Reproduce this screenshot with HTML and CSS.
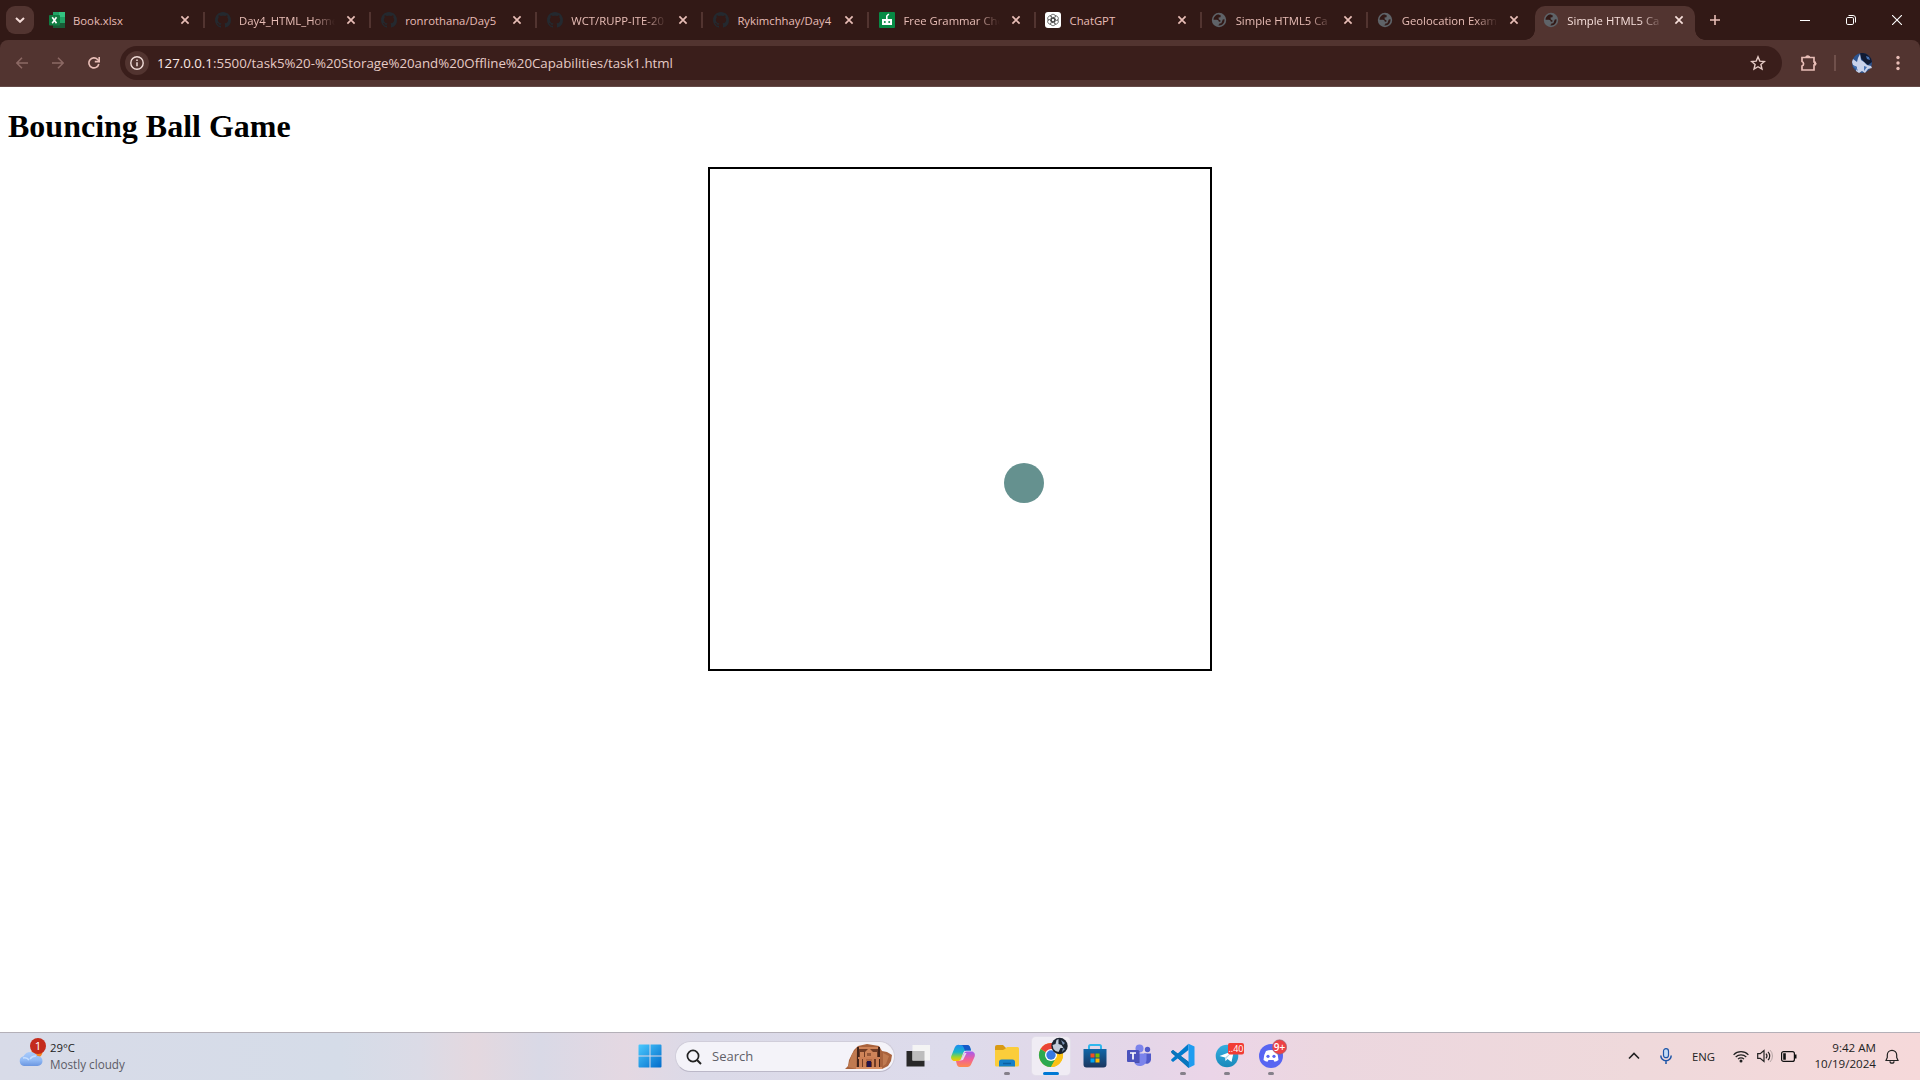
FILE: index.html
```html
<!DOCTYPE html>
<html lang="en">
<head>
<meta charset="utf-8">
<title>Bouncing Ball Game</title>
<link rel="stylesheet" href="styles.css">
</head>
<body>
<svg class="defs" aria-hidden="true">
  <symbol id="close" viewBox="0 0 10 10"><path d="M1.4 1.4l7.2 7.2M8.6 1.4L1.4 8.6" fill="none" stroke="currentColor" stroke-width="1.7"/></symbol>
  <symbol id="github" viewBox="0 0 16 16"><path fill="#24292f" d="M8 0C3.58 0 0 3.58 0 8c0 3.54 2.29 6.53 5.47 7.59.4.07.55-.17.55-.38 0-.19-.01-.82-.01-1.49-2.01.37-2.53-.49-2.69-.94-.09-.23-.48-.94-.82-1.13-.28-.15-.68-.52-.01-.53.63-.01 1.08.58 1.23.82.72 1.21 1.87.87 2.33.66.07-.52.28-.87.51-1.07-1.78-.2-3.64-.89-3.64-3.95 0-.87.31-1.59.82-2.15-.08-.2-.36-1.02.08-2.12 0 0 .67-.21 2.2.82.64-.18 1.32-.27 2-.27s1.36.09 2 .27c1.53-1.04 2.2-.82 2.2-.82.44 1.1.16 1.92.08 2.12.51.56.82 1.27.82 2.15 0 3.07-1.87 3.75-3.65 3.95.29.25.54.73.54 1.48 0 1.07-.01 1.93-.01 2.2 0 .21.15.46.55.38A8.01 8.01 0 0 0 16 8c0-4.42-3.58-8-8-8z"/></symbol>
  <symbol id="globe" viewBox="0 0 16 16"><circle cx="8" cy="8" r="7.2" fill="#5f6368"/><path class="land" d="M8.3 2.6C5.400 2.300 2.800 4.400 2.500 7.700l3.200 0c1.600 0 2.100 1 2.100 2l1.600 0 0-1.400-1.600-.8-.3-1.900 1.900-.4.5-1.600-1.600-.6zM13.500 7.300l-1.700.1-.6 1.500-.9 2.300-1.900.3-.3 1.200-1.600.4c3.600 1.500 7.400-1.400 7-5.800z"/></symbol>
  <symbol id="portrait" viewBox="0 0 20 20"><circle cx="10" cy="10" r="10" fill="#2c5490"/><path d="M8 0.200a10 10 0 0 1 12 8.800l-4 3-4-3-3-4z" fill="#101a33"/><path d="M1 6l4 3 1-4 2-4 1 6 3 2 3 3 4 1 1 2-4 1-3 4-3-2-3 2-3-2 1-4-4-2-1-3z" fill="#c9d2ea"/><path d="M1 13l3 0 2 5zM14 3l3 1 1 3-3-1zM12 13l3 1-3 4z" fill="#4672b4"/></symbol>
</svg>

<header class="browser">
  <div class="tabstrip">
    <button class="tab-search"><svg width="10" height="6" viewBox="0 0 10 6"><path d="M1 1l4 3.8L9 1" fill="none" stroke="currentColor" stroke-width="2"/></svg></button>
    <div class="tab"><svg class="favicon" viewBox="0 0 16 16"><path d="M4 0h12v16H4z" fill="#21a366"/><path d="M10 0h6v5h-6z" fill="#33c481"/><path d="M4 5h6v6H4z" fill="#107c41"/><path d="M4 11h12v5H4z" fill="#185c37"/><path d="M10 5h6v5h-6z" fill="#21a366"/><rect y="3" width="11" height="10.5" rx="1" fill="#107c41"/><path d="M3.2 5.3l4.3 6M7.5 5.3l-4.3 6" stroke="#fff" stroke-width="1.6"/></svg><span class="tab-title">Book.xlsx</span><svg class="close"><use href="#close"/></svg></div>
    <div class="tab"><svg class="favicon"><use href="#github"/></svg><span class="tab-title faded">Day4_HTML_Home</span><svg class="close"><use href="#close"/></svg></div>
    <div class="tab"><svg class="favicon"><use href="#github"/></svg><span class="tab-title">ronrothana/Day5</span><svg class="close"><use href="#close"/></svg></div>
    <div class="tab"><svg class="favicon"><use href="#github"/></svg><span class="tab-title faded">WCT/RUPP-ITE-20</span><svg class="close"><use href="#close"/></svg></div>
    <div class="tab"><svg class="favicon"><use href="#github"/></svg><span class="tab-title">Rykimchhay/Day4</span><svg class="close"><use href="#close"/></svg></div>
    <div class="tab"><svg class="favicon" viewBox="0 0 16 16"><rect width="16" height="16" rx="1" fill="#078a45"/><path d="M3 7h10v6H3z" fill="#fff"/><path d="M7.8 7V4l2-2" stroke="#fff" stroke-width="1.6" fill="none"/><circle cx="5.8" cy="10" r="1" fill="#078a45"/><circle cx="10.2" cy="10" r="1" fill="#078a45"/></svg><span class="tab-title faded">Free Grammar Che</span><svg class="close"><use href="#close"/></svg></div>
    <div class="tab"><svg class="favicon" viewBox="0 0 16 16"><rect width="16" height="16" rx="3" fill="#fff"/><g fill="none" stroke="#444" stroke-width=".7"><path id="knot" d="M8 5.7L10 6.8v3.4M8 2.3c1.6 0 2.7 1.1 2.7 2.5L8 6.3 6 7.4M5.4 4.7c0-1.4 1.1-2.4 2.6-2.4"/><use href="#knot" transform="rotate(60 8 8)"/><use href="#knot" transform="rotate(120 8 8)"/><use href="#knot" transform="rotate(180 8 8)"/><use href="#knot" transform="rotate(240 8 8)"/><use href="#knot" transform="rotate(300 8 8)"/></g></svg><span class="tab-title">ChatGPT</span><svg class="close"><use href="#close"/></svg></div>
    <div class="tab"><svg class="favicon"><use href="#globe"/></svg><span class="tab-title faded">Simple HTML5 Ca</span><svg class="close"><use href="#close"/></svg></div>
    <div class="tab last"><svg class="favicon"><use href="#globe"/></svg><span class="tab-title faded">Geolocation Exam</span><svg class="close"><use href="#close"/></svg></div>
    <div class="tab active"><svg class="favicon"><use href="#globe"/></svg><span class="tab-title faded">Simple HTML5 Ca</span><svg class="close"><use href="#close"/></svg></div>
    <svg class="new-tab" viewBox="0 0 10 10"><path d="M5 0v10M0 5h10" stroke="currentColor" stroke-width="1.6"/></svg>
    <div class="window-controls">
      <svg width="10" height="10" viewBox="0 0 10 10"><path d="M0 5.5h10" stroke="#fff"/></svg>
      <svg width="10" height="10" viewBox="0 0 10 10"><rect x=".5" y="2.5" width="7" height="7" rx="1.3" fill="none" stroke="#fff"/><path d="M2.5.5H7A2.5 2.5 0 0 1 9.5 3v4.5" fill="none" stroke="#fff"/></svg>
      <svg width="10" height="10" viewBox="0 0 10 10"><path d="M0 0l10 10M10 0L0 10" stroke="#fff" stroke-width="1.1"/></svg>
    </div>
  </div>
  <div class="toolbar">
    <svg class="nav dim" viewBox="0 0 12 12"><path d="M12 6H1M6 .8L.9 6 6 11.2" fill="none" stroke="currentColor" stroke-width="1.5"/></svg>
    <svg class="nav dim" viewBox="0 0 12 12"><path d="M0 6h11M6 .8L11.1 6 6 11.2" fill="none" stroke="currentColor" stroke-width="1.5"/></svg>
    <svg class="nav" viewBox="0 0 12 12"><path d="M10.8 7A5 5 0 1 1 9.600 2.500L11 4" fill="none" stroke="currentColor" stroke-width="1.6"/><path d="M11.2 0v4.600H6.800" fill="none" stroke="currentColor" stroke-width="1.6"/></svg>
    <div class="omnibox">
      <span class="site-info"><svg width="14" height="14" viewBox="0 0 14 14"><circle cx="7" cy="7" r="6.2" fill="none" stroke="currentColor" stroke-width="1.4"/><path d="M7 6.200v4M7 3.500v1.500" stroke="currentColor" stroke-width="1.5"/></svg></span>
      <span class="url"><b>127.0.0.1</b>:5500/task5%20-%20Storage%20and%20Offline%20Capabilities/task1.html</span>
      <svg class="star" width="16" height="16" viewBox="0 0 16 16"><path d="M8 1.800l1.800 4.300 4.600.4-3.500 3 1.100 4.600L8 11.700l-4 2.400 1.100-4.600-3.500-3 4.600-.4z" fill="none" stroke="currentColor" stroke-width="1.4"/></svg>
    </div>
    <svg class="extensions" width="18" height="18" viewBox="0 0 18 18"><path d="M2 3.500h12V8a1.500 1.500 0 0 1 0 3v5H2v-4a2.400 2.400 0 0 0 0-4.500z" fill="none" stroke="currentColor" stroke-width="1.7"/><path d="M5.500 3.500V2.200q2-1.800 4.500 0v1.300M14 7.500h1.500q1.800 2 0 4H14z" fill="currentColor"/></svg>
    <span class="toolbar-rule"></span>
    <svg class="avatar" width="20" height="20"><use href="#portrait"/></svg>
    <svg class="menu" width="4" height="16" viewBox="0 0 4 16"><g fill="currentColor"><circle cx="2" cy="2.5" r="1.7"/><circle cx="2" cy="8" r="1.7"/><circle cx="2" cy="13.5" r="1.7"/></g></svg>
  </div>
</header>

<main class="page">
  <h1>Bouncing Ball Game</h1>
  <svg class="game" width="500" height="500" viewBox="0 0 500 500"><circle cx="314" cy="314" r="20" fill="#65918f"/></svg>
</main>

<footer class="taskbar">
  <div class="weather">
    <svg width="28" height="30" viewBox="0 0 28 30"><defs><linearGradient id="cloud" x2="0" y2="1"><stop stop-color="#a9cbfb"/><stop offset=".6" stop-color="#8fb8f4"/><stop offset="1" stop-color="#6b96e0"/></linearGradient></defs><circle cx="19" cy="14" r="5.5" fill="#f58220"/><path d="M6 28a5 5 0 0 1-.5-9.800A8 8 0 0 1 19.500 18a5 5 0 0 1 0 10z" fill="url(#cloud)"/><path d="M5 20q4-1 6 2M18 18q-4 0-6 3" fill="none" stroke="#c6defe" stroke-width="1.5"/><circle cx="20" cy="8" r="8" fill="#c42b1c"/><text x="20" y="12.3" text-anchor="middle" fill="#fff" class="badge-text">1</text></svg>
    <div class="weather-text"><span>29°C</span><span class="muted">Mostly cloudy</span></div>
  </div>
  <nav class="apps">
    <span class="app"><svg width="24" height="24" viewBox="0 0 24 24"><defs><linearGradient id="win" gradientUnits="userSpaceOnUse" x1="0" y1="0" x2="24" y2="24"><stop stop-color="#4ccbff"/><stop offset="1" stop-color="#0069c9"/></linearGradient></defs><path d="M1.500.5h10v11H.5v-10a1 1 0 0 1 1-1zM12.500.5h10a1 1 0 0 1 1 1v10h-11zM.5 12.500h11v11h-10a1 1 0 0 1-1-1zM12.500 12.500h11v10a1 1 0 0 1-1 1h-10z" fill="url(#win)"/></svg></span>
    <div class="search">
      <svg width="16" height="16" viewBox="0 0 16 16"><circle cx="7" cy="7" r="5.6" fill="none" stroke="#222" stroke-width="1.7"/><path d="M11 11l4 4" stroke="#222" stroke-width="2"/></svg>
      <span>Search</span>
      <svg class="petra" width="47" height="26" viewBox="0 0 47 26"><path d="M0 25l3-3 1-6 5-10 4-4L22 0l12 2 3 5 5 1 5 3-1 6-3 5-6 3z" fill="#a9633d"/><path d="M3 23l4-13 5-6-1 21zM38 9l6 3-3 8-3 2z" fill="#c07a50"/><path d="M12 3h23v21H12z" fill="#713c25"/><path d="M12 3h2v20h-2zM33 3h2v20h-2z" fill="#42241a"/><path d="M14 3h19v2H14zM15 8h4v5h-4zM28 8h4v5h-4zM20 8l4-4 4 4v5h-8z" fill="#cf8459"/><path d="M13 13h22v2H13zM14 15h3v8h-3zM18 15h3v8h-3zM27 15h2v8h-2zM31 15h3v8h-3z" fill="#cc7e54"/><path d="M21 15h6v3h-6z" fill="#b46a44"/><path d="M22 17h4v6h-4z" fill="#24134a"/><path d="M11 23h26v2H11z" fill="#d98f63"/><path d="M22 9h4v3h-4z" fill="#96583a"/></svg>
    </div>
    <span class="app task-view"><svg width="24" height="24" viewBox="0 0 24 24"><path d="M.5 7h18v15.500H.5z" fill="#282828"/><path d="M6.500 1h17.500v15.500H6.500z" fill="#f4f4f4"/><path d="M6.500 7h12v9.500h-12z" fill="#bdbdbd"/></svg></span>
    <span class="app"><svg width="26" height="26" viewBox="0 0 26 26"><defs><linearGradient id="cpa" x2="0" y2="1"><stop stop-color="#1e8cf0"/><stop offset=".45" stop-color="#18b6c8"/><stop offset=".75" stop-color="#9bd52f"/><stop offset="1" stop-color="#ffc400"/></linearGradient><linearGradient id="cpb" x2="0" y2="1"><stop stop-color="#a35af0"/><stop offset=".5" stop-color="#f0609a"/><stop offset="1" stop-color="#ff8a4a"/></linearGradient></defs><path d="M9.500 2H17a3 3 0 0 1 3 2l1 3.500h-5a3 3 0 0 0-2.700 2L11 16a3 3 0 0 1-3 2H4.500C2 18 .5 15.500 1.300 13L4.700 4.500A4 4 0 0 1 9.500 2z" fill="url(#cpa)"/><path d="M17 2a3 3 0 0 1 3 2l1 3.500h-5a3 3 0 0 0-1 .3L13.500 4A3 3 0 0 0 11 2z" fill="#1559c8"/><path d="M16.500 24H10a3 3 0 0 1-3-2l-1-4h3a3 3 0 0 0 2.700-2L14 10.500a3 3 0 0 1 3-2h4.500c2.500 0 4 2.500 3.200 5l-3.400 7.500A4.500 4.500 0 0 1 16.500 24z" fill="url(#cpb)"/><path d="M14.500 10l2 0-3.500 7-2.300.5z" fill="#e4e0ee"/></svg></span>
    <span class="app running"><svg width="26" height="24" viewBox="0 0 26 24"><path d="M1 3a2 2 0 0 1 2-2h6l3 3v5H1z" fill="#d99a13"/><path d="M11 5l2-2h10.500A1.500 1.500 0 0 1 25 4.500V21a1.500 1.500 0 0 1-1.500 1.500h-21A1.500 1.500 0 0 1 1 21V6h8z" fill="#fbcd3b"/><path d="M5 22.500V18a2.500 2.500 0 0 1 2.500-2.500h11A2.500 2.500 0 0 1 21 18v4.500z" fill="#1580c8"/><path d="M9 19.500h8" stroke="#0b5fa0" stroke-width="1.5"/></svg></span>
    <span class="app current"><svg width="30" height="32" viewBox="0 0 30 32"><circle cx="13" cy="18" r="12" fill="#fbc116"/><path d="M13 18L2.600 12a12 12 0 0 1 20.800 0z" fill="#ea4335"/><path d="M13 18h-1L2.600 12A12 12 0 0 0 13 30l5-9z" fill="#2da94f"/><path d="M13 12h10.400A12 12 0 0 1 13 30l5.200-9z" fill="#fbc116"/><circle cx="13" cy="18" r="6" fill="#fff"/><circle cx="13" cy="18" r="4.7" fill="#3779e4"/><circle cx="21.500" cy="9" r="8.2" fill="#1b2430"/><path d="M14.500 8l3-1 1-4 2-1 0 5 3 1 2 3-3 0-2 4-3-1-2-2z" fill="#c3ccda"/><path d="M23 3l4 3-2 2zM25 11l2 1-3 3z" fill="#7b93b5"/></svg></span>
    <span class="app"><svg width="24" height="24" viewBox="0 0 24 24"><defs><linearGradient id="store" x2="0" y2="1"><stop stop-color="#1267a8"/><stop offset="1" stop-color="#1b365f"/></linearGradient></defs><path d="M6 6V2.500A1.500 1.500 0 0 1 7.500 1h9A1.500 1.500 0 0 1 18 2.500V6" fill="none" stroke="#31b7ed" stroke-width="2"/><path d="M.5 5h23v15.500a3 3 0 0 1-3 3h-17a3 3 0 0 1-3-3z" fill="url(#store)"/><path d="M7.500 9.500h4v4h-4z" fill="#f25022"/><path d="M12.500 9.500h4v4h-4z" fill="#7fba00"/><path d="M7.500 14.500h4v4h-4z" fill="#00a4ef"/><path d="M12.500 14.500h4v4h-4z" fill="#ffb900"/></svg></span>
    <span class="app"><svg width="26" height="24" viewBox="0 0 26 24"><circle cx="21.5" cy="5.5" r="2.7" fill="#5059c9"/><path d="M18 9.500h7V16a4.500 4.500 0 0 1-7 3z" fill="#5059c9"/><circle cx="13.5" cy="4.5" r="4" fill="#7b83eb"/><path d="M8 9.500h12.500V16a6.500 6.500 0 0 1-12.500 2z" fill="#7b83eb"/><path d="M9 7h4.500v12H9z" fill="#4a4fa8"/><rect x="1" y="6" width="12" height="12" rx="1" fill="#4b53bc"/><path d="M4 9h6M7 9v6.500" stroke="#fff" stroke-width="1.7"/></svg></span>
    <span class="app running"><svg width="26" height="26" viewBox="0 0 26 26"><path d="M1 8.500l2-1.500 16 12v6L1.500 10z" fill="#0065a9"/><path d="M1.200 16.500L18.500.8V7L3 19l-1.800-1.500z" fill="#007acc"/><path d="M18.500.8l6 2.700V22l-6 3z" fill="#1f9cf0"/><path d="M1.200 8.500L3 7l15.500 12v6z" fill="#0877bf"/></svg></span>
    <span class="app running telegram"><svg width="30" height="26" viewBox="0 0 30 26"><defs><linearGradient id="tg" x2="0" y2="1"><stop stop-color="#35aee1"/><stop offset="1" stop-color="#1989ba"/></linearGradient></defs><circle cx="13" cy="14" r="11.3" fill="url(#tg)"/><path d="M5.500 14L20 8.500 17.500 20l-4-3-2 2-.5-3.500z" fill="#fff"/><path d="M11 15.500l6-4.500-4.500 5.500-1 2.500z" fill="#b5d6e8"/><rect x="14" y="1" width="16" height="11.5" rx="2" fill="#f23c34"/><text class="tg-count" x="22" y="10" text-anchor="middle" fill="#fff">..40</text></svg></span>
    <span class="app running discord"><svg width="30" height="30" viewBox="0 0 30 30"><circle cx="14" cy="17" r="12" fill="#5865f2"/><path d="M9 12q5-1.800 10 0 2.500 4 2.500 9-2 1.500-4 1.800l-1-1.800h-5l-1 1.800q-2-.3-4-1.800 0-5 2.500-9z" fill="#fff"/><circle cx="11" cy="17.3" r="1.6" fill="#5865f2"/><circle cx="17" cy="17.3" r="1.6" fill="#5865f2"/><circle cx="22.5" cy="8" r="7.2" fill="#ed4245" stroke="#8c6676" stroke-width=".6"/><text class="dc-count" x="22.5" y="11.7" text-anchor="middle" fill="#fff">9+</text></svg></span>
  </nav>
  <div class="tray">
    <svg width="12" height="8" viewBox="0 0 12 8"><path d="M1 6.500l5-5 5 5" fill="none" stroke="#222" stroke-width="1.6"/></svg>
    <svg class="mic" width="12" height="16" viewBox="0 0 12 16"><rect x="3.5" y=".7" width="5" height="9" rx="2.5" fill="#c4dcf7" stroke="#1d55a7" stroke-width="1.2"/><path d="M.8 7.500a5.200 5.200 0 0 0 10.400 0M6 12.700V16" fill="none" stroke="#1d55a7" stroke-width="1.5"/></svg>
    <span class="lang">ENG</span>
    <svg class="wifi" width="16" height="13" viewBox="0 0 16 13"><g fill="none" stroke="#222" stroke-width="1.2"><path d="M.6 4.800a10.400 10.400 0 0 1 14.800 0M2.700 7a7.500 7.500 0 0 1 10.600 0M5 9.200a4.200 4.200 0 0 1 6 0"/></g><circle cx="8" cy="11" r="1.5" fill="#222"/></svg>
    <svg class="sound" width="16" height="14" viewBox="0 0 16 14"><path d="M.7 4.700h2.500L7 1.500v11L3.200 9.300H.7z" fill="none" stroke="#222" stroke-width="1.2"/><path d="M9 4.700a3.500 3.500 0 0 1 0 4.600M11 2.800a6 6 0 0 1 0 8.400" fill="none" stroke="#222" stroke-width="1.2"/><path d="M13 1a8.500 8.500 0 0 1 0 12" fill="none" stroke="#b6a5a5"/></svg>
    <svg class="battery" width="16" height="11" viewBox="0 0 16 11"><rect x=".6" y=".6" width="12.8" height="9.8" rx="2" fill="none" stroke="#111" stroke-width="1.2"/><path d="M2.200 2.200h2.600v6.600H2.200zM14 3.500h1.500v4H14z" fill="#111"/></svg>
    <div class="clock"><span>9:42 AM</span><span>10/19/2024</span></div>
    <svg class="bell" width="14" height="15" viewBox="0 0 14 15"><path d="M1 11.500l1.300-3V6a4.700 4.700 0 0 1 9.400 0v2.500l1.300 3zM5 12.200a2 2 0 0 0 4 0" fill="none" stroke="#222" stroke-width="1.2"/></svg>
  </div>
</footer>
</body>
</html>
```
FILE: styles.css
```css
* { box-sizing: border-box; }

body {
  margin: 0;
  height: 1080px;
  overflow: hidden;
  display: flex;
  flex-direction: column;
  background: #fff;
}

svg { display: block; flex: none; }
.defs { display: none; }

/* Browser chrome */
.browser {
  height: 87px;
  background: #321916;
  color: #e8bdb6;
  font-family: "Open Sans", sans-serif;
}

.tabstrip {
  display: flex;
  height: 40px;
  padding-left: 6px;
}

.tab-search {
  width: 28px;
  height: 28px;
  margin: 6px 4px 0 0;
  padding: 0;
  display: grid;
  place-items: center;
  border: 0;
  border-radius: 9px;
  background: #523430;
  color: #f5dcd8;
}

.tab {
  flex: none;
  width: 166.1px;
  height: 28px;
  margin-top: 6px;
  padding: 0 14px 0 10.5px;
  display: flex;
  align-items: center;
  position: relative;
}

.tab:not(.last):not(.active)::after {
  content: "";
  position: absolute;
  right: -1px;
  top: 6px;
  width: 2px;
  height: 16px;
  background: #523430;
}

.favicon { width: 16px; height: 16px; margin-right: 8.5px; }
.land { fill: #321916; }

.tab-title {
  flex: 1;
  white-space: nowrap;
  font-size: 11.3px;
  line-height: 18px;
  padding-top: 1px;
  margin-right: 11px;
  min-width: 0;
}

.faded {
  -webkit-mask-image: linear-gradient(90deg, #000 76%, transparent);
  mask-image: linear-gradient(90deg, #000 76%, transparent);
}

.close { width: 10px; height: 10px; }

.active {
  width: 160px;
  height: 34px;
  margin-left: 2px;
  padding: 0 11px 6px 8px;
  border-radius: 10px 10px 0 0;
  background: #523430;
  color: #f7dfdb;
}

.active::before,
.active::after {
  content: "";
  position: absolute;
  bottom: 0;
  width: 10px;
  height: 10px;
}

.active::before { left: -10px; background: radial-gradient(circle at 0 0, transparent 9.5px, #523430 10px); }
.active::after { right: -10px; background: radial-gradient(circle at 100% 0, transparent 9.5px, #523430 10px); }

.new-tab { width: 10px; height: 10px; margin: 15px 0 0 15px; }

.window-controls {
  display: flex;
  gap: 36px;
  margin: 15px 18px 0 auto;
}

.toolbar {
  height: 47px;
  display: flex;
  align-items: center;
  padding: 0 20px 1px 16px;
  background: #523430;
  border-bottom: 1px solid #644a47;
  border-radius: 8px 8px 0 0;
}

.nav { width: 12px; height: 12px; margin-right: 24px; }
.nav:nth-of-type(3) { margin-right: 20px; }
.dim { color: #8c6964; }

.omnibox {
  flex: 1;
  height: 34px;
  display: flex;
  align-items: center;
  padding: 0 16px 0 5px;
  border-radius: 17px;
  background: #3a1e1b;
  color: #e6cbc6;
}

.site-info {
  width: 24px;
  height: 24px;
  display: grid;
  place-items: center;
  border-radius: 50%;
  background: #523430;
  color: #f0dcd8;
}

.url {
  flex: 1;
  margin-left: 8px;
  font-size: 13.3px;
  white-space: nowrap;
  letter-spacing: -0.02px;
}

.url b { color: #fbe9e6; font-weight: 400; }
.extensions { margin-left: 18px; }
.toolbar-rule { width: 2px; height: 16px; margin: 0 16px; background: #70504b; }
.menu { margin-left: 24px; }

/* Web page */
.page { height: 945px; padding: 0 8px; }

.page h1 {
  margin: 21.44px 0;
  font: bold 32px/37px "Liberation Serif", "Times New Roman", serif;
  color: #000;
}

.game {
  box-sizing: content-box;
  margin: 0 auto;
  border: 2px solid #000;
}

/* Taskbar */
.taskbar {
  height: 48px;
  display: flex;
  border-top: 1px solid #b4b0b8;
  font-family: "Open Sans", sans-serif;
  font-size: 11.3px;
  color: #222;
  background: linear-gradient(90deg, #d8dbe8 0, #d5dce8 340px, #dbdbe6 420px, #e4d8df 475px, #d9d9e6 540px, #e4d8e2 625px, #dbdae8 700px, #dddbeb 950px, #e5d6e8 1150px, #ebd5e8 1210px, #ecd7df 1330px, #efd9db 1640px, #f6d9da 1920px);
}

.weather {
  width: 628px;
  display: flex;
  padding: 5px 0 0 18px;
}

.weather-text,
.clock {
  display: flex;
  flex-direction: column;
  line-height: 16px;
}

.weather-text { margin: 2px 0 0 4px; }
.muted { color: #5c5c67; font-size: 11.7px; }
.badge-text { font-size: 11.5px; }

.apps { display: flex; }

.app {
  width: 44px;
  height: 46px;
  display: grid;
  place-items: center;
  position: relative;
}

.running::after,
.current::after {
  content: "";
  position: absolute;
  left: 19px;
  bottom: 4px;
  width: 6px;
  height: 3px;
  border-radius: 2px;
  background: #85808a;
}

.current::before {
  content: "";
  position: absolute;
  inset: 4px 3px 4px;
  border-radius: 4px;
  background: #f0ecf4;
  box-shadow: 0 0 0 1px #e3deea;
}

.current svg { position: relative; top: -3px; left: 2px; }
.current::after { left: 14px; width: 16px; background: #0078d4; }
.task-view svg { margin-left: -2px; }
.telegram svg { margin-left: 3px; margin-top: -2px; }
.discord svg { margin-left: 2px; margin-top: -5px; }

.search {
  width: 220px;
  height: 31px;
  margin: 8px 2px 0 3px;
  padding: 0 2px 0 10px;
  display: flex;
  align-items: center;
  border: 1px solid #d0cdda;
  border-bottom-color: #bbb8c8;
  border-radius: 16px;
  background: #f4f3f9;
  color: #606068;
  font-size: 13px;
}

.search span { margin: -2px 0 0 10px; }
.petra { margin-left: auto; }

.tray {
  flex: 1;
  display: flex;
  align-items: center;
  justify-content: flex-end;
  padding: 0 21px 1px 0;
}

.mic { margin-left: 20px; }
.lang { margin-left: 20px; padding-top: 1px; width: 24px; }
.wifi { margin-left: 17px; }
.sound { margin-left: 8px; }
.battery { margin-left: 8px; }
.clock { width: 79px; margin-top: -1px; text-align: right; font-size: 11.6px; }
.bell { margin-left: 9px; }
.tg-count { font-size: 9px; }
.dc-count { font-size: 10px; font-weight: 600; }
```
